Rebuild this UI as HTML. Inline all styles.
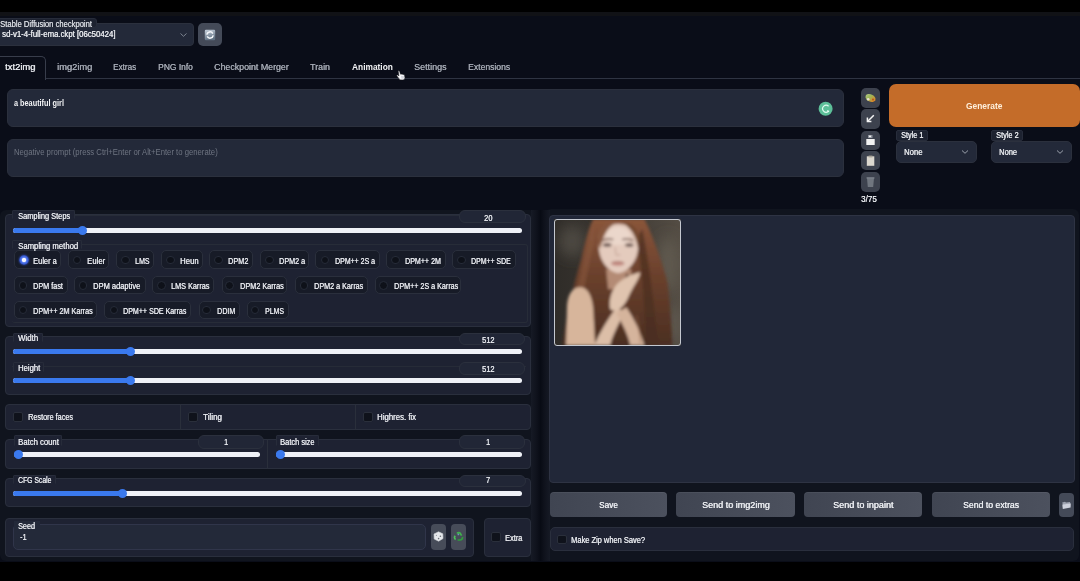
<!DOCTYPE html>
<html><head><meta charset="utf-8"><style>
html,body{margin:0;padding:0;width:1080px;height:581px;overflow:hidden;background:#0b0f19;}
body>div,body>svg{position:absolute;}
.t{font-family:'Liberation Sans', sans-serif;white-space:pre;transform-origin:0 0;font-variant-ligatures:none;font-feature-settings:'liga' 0;}
</style></head><body>
<div style="left:0px;top:0px;width:1080px;height:11.5px;background:#000;border-radius:0px;"></div>
<div style="left:0px;top:11.5px;width:1080px;height:4.0px;background:#111216;border-radius:0px;"></div>
<div style="left:0px;top:15.5px;width:1080px;height:546.5px;background:#0a0d18;border-radius:0px;"></div>
<div style="left:0px;top:562px;width:1080px;height:19px;background:#000;border-radius:0px;"></div>
<div style="left:-6px;top:23px;width:200px;height:23px;background:#232939;border:1px solid #2b303d;box-sizing:border-box;border-radius:4px;"></div>
<div style="left:-4px;top:18px;width:101px;height:10px;background:#1d2230;border:1px solid #272c3a;box-sizing:border-box;border-radius:3px;"></div>
<svg style="left:178.5px;top:31.5px" width="9" height="6" viewBox="0 0 9 6"><path d="M1.5 1.5 L4.5 4.3 L7.5 1.5" stroke="#858b97" stroke-width="0.9" fill="none"/></svg>
<div style="left:198px;top:23px;width:24px;height:23px;background:#444a58;border-radius:5px;"></div>
<svg style="left:204px;top:28.5px" width="12" height="12" viewBox="0 0 12 12"><defs><linearGradient id="rf" x1="0" y1="0" x2="0.3" y2="1"><stop offset="0" stop-color="#c9d3de"/><stop offset="1" stop-color="#5f6f80"/></linearGradient></defs><rect x="0.8" y="0.8" width="10.4" height="10.4" rx="1.2" fill="url(#rf)"/><path d="M2.8 5.6 A3.2 3.2 0 0 1 8.8 4.6" stroke="#f6f8fb" stroke-width="1.5" fill="none"/><path d="M9.2 6.4 A3.2 3.2 0 0 1 3.2 7.4" stroke="#f6f8fb" stroke-width="1.5" fill="none"/></svg>
<div style="left:45px;top:78px;width:1035px;height:1px;background:#2f3442;border-radius:0px;"></div>
<div style="left:-4px;top:55.5px;width:49.5px;height:24px;border:1px solid #383d4b;border-bottom:none;border-radius:0 5px 0 0;box-sizing:border-box;background:#0a0d18"></div>
<svg style="left:396px;top:70.3px" width="10" height="10.5" viewBox="0 0 10 10.5"><path d="M2.2 1.2 C2.5 0.5 3.4 0.6 3.6 1.3 L4.5 4.2 C4.9 3.8 5.7 3.9 5.9 4.4 C6.3 4 7.1 4.1 7.3 4.7 C7.7 4.4 8.4 4.6 8.5 5.2 L8.9 7.4 C9 8.7 8.1 9.8 6.8 9.9 L4.6 9.9 C3.8 9.8 3.2 9.2 2.8 8.4 L0.9 6 C0.5 5.4 1.2 4.6 1.9 5.1 L2.9 5.9 Z" fill="#f6f6f8" stroke="#15161a" stroke-width="0.55"/><path d="M5 6 L7.8 6 L8.2 8.6 L5.4 8.8 Z" fill="#c4c8d0" opacity="0.7"/></svg>
<div style="left:7px;top:89px;width:837px;height:38px;background:#232939;border:1px solid #2b303d;box-sizing:border-box;border-radius:6px;"></div>
<svg style="left:818px;top:101px" width="16" height="16" viewBox="0 0 16 16"><circle cx="7.6" cy="7.7" r="7" fill="#5dbf99"/><path d="M10.6 5.2 A3.5 3.5 0 1 0 10.4 10.4" stroke="#dffaf0" stroke-width="1.2" fill="none"/><path d="M9.2 9.6 L11 10.6" stroke="#e9fff6" stroke-width="1.5"/></svg>
<div style="left:7px;top:139px;width:837px;height:37.5px;background:#232939;border:1px solid #2b303d;box-sizing:border-box;border-radius:6px;"></div>
<div style="left:860.6px;top:88.4px;width:19.399999999999977px;height:19.200000000000003px;background:#3d424e;border-radius:5px;"></div>
<div style="left:860.6px;top:109.4px;width:19.399999999999977px;height:19.19999999999999px;background:#3d424e;border-radius:5px;"></div>
<div style="left:860.6px;top:130.5px;width:19.399999999999977px;height:19.19999999999999px;background:#3d424e;border-radius:5px;"></div>
<div style="left:860.6px;top:151.3px;width:19.399999999999977px;height:19.19999999999999px;background:#3d424e;border-radius:5px;"></div>
<div style="left:860.6px;top:172.4px;width:19.399999999999977px;height:19.19999999999999px;background:#3d424e;border-radius:5px;"></div>
<svg style="left:864px;top:92px" width="13" height="12" viewBox="0 0 13 12"><defs><linearGradient id="pal" x1="0" y1="0" x2="1" y2="0.3"><stop offset="0" stop-color="#b9c98a"/><stop offset="0.45" stop-color="#9cb85a"/><stop offset="1" stop-color="#d88a2a"/></linearGradient></defs><ellipse cx="6.5" cy="6" rx="5.3" ry="3.6" fill="url(#pal)" transform="rotate(25 6.5 6)"/><circle cx="4.2" cy="7.3" r="1.3" fill="#e8e2d0"/><circle cx="9" cy="7.5" r="1" fill="#b8541e"/></svg>
<svg style="left:865px;top:113px" width="11" height="11" viewBox="0 0 11 11"><path d="M8.8 2.2 L3 8" stroke="#f4f4f4" stroke-width="1.5"/><path d="M2.4 4.6 L2.4 8.6 L6.4 8.6" stroke="#f4f4f4" stroke-width="1.5" fill="none"/></svg>
<svg style="left:864px;top:133px" width="13" height="14" viewBox="0 0 13 14"><rect x="4" y="2" width="4.5" height="3" fill="#8d929c"/><rect x="5" y="2.6" width="2" height="1.6" fill="#f0f0f0"/><rect x="2.3" y="6" width="8.4" height="6" fill="#f2f2f2"/></svg>
<svg style="left:864px;top:154px" width="13" height="14" viewBox="0 0 13 14"><rect x="2.8" y="2.3" width="7.5" height="9.5" fill="#dcd8cf"/><rect x="4.6" y="1.6" width="3.8" height="1.8" fill="#aaa59a"/></svg>
<svg style="left:864px;top:175px" width="13" height="14" viewBox="0 0 13 14"><path d="M3 3.2 L10 3.2 L9.2 12 L3.8 12 Z" fill="#70767f"/><rect x="2.6" y="2.3" width="7.8" height="1.3" fill="#858b94"/></svg>
<div style="left:889px;top:84px;width:191px;height:43px;background:#c46c29;border-radius:7px;"></div>
<div style="left:896px;top:140.5px;width:81.29999999999995px;height:22.900000000000006px;background:#232939;border:1px solid #2b303d;box-sizing:border-box;border-radius:5px;"></div>
<div style="left:896px;top:130px;width:32px;height:11px;background:#1d2230;border:1px solid #272c3a;box-sizing:border-box;border-radius:2px;"></div>
<svg style="left:961.3px;top:149px" width="8" height="6" viewBox="0 0 8 6"><path d="M1 1.5 L4 4.3 L7 1.5" stroke="#9aa0ab" stroke-width="1" fill="none"/></svg>
<div style="left:991.3px;top:140.5px;width:80.70000000000005px;height:22.900000000000006px;background:#232939;border:1px solid #2b303d;box-sizing:border-box;border-radius:5px;"></div>
<div style="left:991.3px;top:130px;width:31.700000000000045px;height:11px;background:#1d2230;border:1px solid #272c3a;box-sizing:border-box;border-radius:2px;"></div>
<svg style="left:1056.0px;top:149px" width="8" height="6" viewBox="0 0 8 6"><path d="M1 1.5 L4 4.3 L7 1.5" stroke="#9aa0ab" stroke-width="1" fill="none"/></svg>
<div style="left:0px;top:209.5px;width:536px;height:351.5px;background:#10141e;border-radius:6px;"></div>
<div style="left:545px;top:209px;width:534px;height:352px;background:#10141e;border-radius:6px;"></div>
<div style="left:530.5px;top:209.5px;width:19.0px;height:351.5px;background:linear-gradient(90deg,#161a25 0%,#0f121c 30%,#080b14 50%,#0f121c 70%,#161a25 100%);border-radius:0px;"></div>
<div style="left:5px;top:214px;width:525.5px;height:112.5px;background:#1e2232;border:1px solid #2a2f3d;box-sizing:border-box;border-radius:4px;"></div>
<div style="left:12px;top:214.5px;width:447px;height:0.8000000000000114px;background:#272c38;border-radius:0px;"></div>
<div style="left:459.3px;top:210.3px;width:66.49999999999994px;height:12.899999999999977px;background:#212636;border:1px solid #2b303d;box-sizing:border-box;border-radius:6px;"></div>
<div style="left:12.4px;top:210.3px;width:62.6px;height:9.199999999999989px;background:#1e2232;border:1px solid #272c3a;box-sizing:border-box;border-radius:1.5px;border-bottom:none;"></div>
<div style="left:13px;top:227.7px;width:509.20000000000005px;height:5.0px;background:#eff1f7;border-radius:3px;"></div>
<div style="left:13px;top:227.7px;width:69.5px;height:5.0px;background:#3a79ee;border-radius:3px;"></div>
<div style="left:78.0px;top:225.7px;width:9.0px;height:9.0px;background:#3a79ee;border-radius:5px;"></div>
<div style="left:12px;top:244.2px;width:516px;height:78.60000000000002px;background:transparent;border:1px solid #272c38;box-sizing:border-box;border-radius:3px;border-left:none;"></div>
<div style="left:12.4px;top:240px;width:70.1px;height:9px;background:#1e2232;border:1px solid #272c3a;box-sizing:border-box;border-radius:1.5px;border-bottom:none;"></div>
<div style="left:13.8px;top:250.3px;width:47.400000000000006px;height:19.19999999999999px;background:#171b27;border:1px solid #2a2f3c;box-sizing:border-box;border-radius:5px;"></div>
<div style="left:18.7px;top:254.89999999999998px;width:10.0px;height:10.0px;background:radial-gradient(circle,#f4f6ff 0,#f4f6ff 1.8px,#5b7ff0 2.6px,#3a5fd8 4px,#27409a 5px);border-radius:5px;box-shadow:0 0 2px #3150c0;"></div>
<div style="left:67.8px;top:250.3px;width:41.60000000000001px;height:19.19999999999999px;background:#171b27;border:1px solid #2a2f3c;box-sizing:border-box;border-radius:5px;"></div>
<div style="left:72.6px;top:255.49999999999997px;width:8.800000000000011px;height:8.799999999999983px;background:#0e1119;border:1px solid #262b38;box-sizing:border-box;border-radius:5px;"></div>
<div style="left:116px;top:250.3px;width:38.30000000000001px;height:19.19999999999999px;background:#171b27;border:1px solid #2a2f3c;box-sizing:border-box;border-radius:5px;"></div>
<div style="left:121.19999999999999px;top:255.49999999999997px;width:8.800000000000011px;height:8.799999999999983px;background:#0e1119;border:1px solid #262b38;box-sizing:border-box;border-radius:5px;"></div>
<div style="left:161.3px;top:250.3px;width:42.0px;height:19.19999999999999px;background:#171b27;border:1px solid #2a2f3c;box-sizing:border-box;border-radius:5px;"></div>
<div style="left:165.9px;top:255.49999999999997px;width:8.800000000000011px;height:8.799999999999983px;background:#0e1119;border:1px solid #262b38;box-sizing:border-box;border-radius:5px;"></div>
<div style="left:209px;top:250.3px;width:44.30000000000001px;height:19.19999999999999px;background:#171b27;border:1px solid #2a2f3c;box-sizing:border-box;border-radius:5px;"></div>
<div style="left:213.79999999999998px;top:255.49999999999997px;width:8.800000000000011px;height:8.799999999999983px;background:#0e1119;border:1px solid #262b38;box-sizing:border-box;border-radius:5px;"></div>
<div style="left:259.7px;top:250.3px;width:49.60000000000002px;height:19.19999999999999px;background:#171b27;border:1px solid #2a2f3c;box-sizing:border-box;border-radius:5px;"></div>
<div style="left:264.90000000000003px;top:255.49999999999997px;width:8.799999999999955px;height:8.799999999999983px;background:#0e1119;border:1px solid #262b38;box-sizing:border-box;border-radius:5px;"></div>
<div style="left:314.7px;top:250.3px;width:65.60000000000002px;height:19.19999999999999px;background:#171b27;border:1px solid #2a2f3c;box-sizing:border-box;border-radius:5px;"></div>
<div style="left:320.5px;top:255.49999999999997px;width:8.799999999999955px;height:8.799999999999983px;background:#0e1119;border:1px solid #262b38;box-sizing:border-box;border-radius:5px;"></div>
<div style="left:385.6px;top:250.3px;width:60.69999999999999px;height:19.19999999999999px;background:#171b27;border:1px solid #2a2f3c;box-sizing:border-box;border-radius:5px;"></div>
<div style="left:391.20000000000005px;top:255.49999999999997px;width:8.799999999999955px;height:8.799999999999983px;background:#0e1119;border:1px solid #262b38;box-sizing:border-box;border-radius:5px;"></div>
<div style="left:451.6px;top:250.3px;width:64.5px;height:19.19999999999999px;background:#171b27;border:1px solid #2a2f3c;box-sizing:border-box;border-radius:5px;"></div>
<div style="left:456.8px;top:255.49999999999997px;width:8.799999999999955px;height:8.799999999999983px;background:#0e1119;border:1px solid #262b38;box-sizing:border-box;border-radius:5px;"></div>
<div style="left:13.8px;top:276.4px;width:54.3px;height:18.100000000000023px;background:#171b27;border:1px solid #2a2f3c;box-sizing:border-box;border-radius:5px;"></div>
<div style="left:18.6px;top:281.05px;width:8.799999999999997px;height:8.799999999999955px;background:#0e1119;border:1px solid #262b38;box-sizing:border-box;border-radius:5px;"></div>
<div style="left:74.1px;top:276.4px;width:71.80000000000001px;height:18.100000000000023px;background:#171b27;border:1px solid #2a2f3c;box-sizing:border-box;border-radius:5px;"></div>
<div style="left:78.6px;top:281.05px;width:8.800000000000011px;height:8.799999999999955px;background:#0e1119;border:1px solid #262b38;box-sizing:border-box;border-radius:5px;"></div>
<div style="left:152.3px;top:276.4px;width:61.69999999999999px;height:18.100000000000023px;background:#171b27;border:1px solid #2a2f3c;box-sizing:border-box;border-radius:5px;"></div>
<div style="left:156.79999999999998px;top:281.05px;width:8.800000000000011px;height:8.799999999999955px;background:#0e1119;border:1px solid #262b38;box-sizing:border-box;border-radius:5px;"></div>
<div style="left:221.7px;top:276.4px;width:65.5px;height:18.100000000000023px;background:#171b27;border:1px solid #2a2f3c;box-sizing:border-box;border-radius:5px;"></div>
<div style="left:225.29999999999998px;top:281.05px;width:8.800000000000011px;height:8.799999999999955px;background:#0e1119;border:1px solid #262b38;box-sizing:border-box;border-radius:5px;"></div>
<div style="left:294.7px;top:276.4px;width:73.10000000000002px;height:18.100000000000023px;background:#171b27;border:1px solid #2a2f3c;box-sizing:border-box;border-radius:5px;"></div>
<div style="left:299.70000000000005px;top:281.05px;width:8.799999999999955px;height:8.799999999999955px;background:#0e1119;border:1px solid #262b38;box-sizing:border-box;border-radius:5px;"></div>
<div style="left:375.3px;top:276.4px;width:85.89999999999998px;height:18.100000000000023px;background:#171b27;border:1px solid #2a2f3c;box-sizing:border-box;border-radius:5px;"></div>
<div style="left:378.90000000000003px;top:281.05px;width:8.799999999999955px;height:8.799999999999955px;background:#0e1119;border:1px solid #262b38;box-sizing:border-box;border-radius:5px;"></div>
<div style="left:13.8px;top:300.9px;width:83.10000000000001px;height:18.100000000000023px;background:#171b27;border:1px solid #2a2f3c;box-sizing:border-box;border-radius:5px;"></div>
<div style="left:18.6px;top:305.55px;width:8.799999999999997px;height:8.799999999999955px;background:#0e1119;border:1px solid #262b38;box-sizing:border-box;border-radius:5px;"></div>
<div style="left:104.3px;top:300.9px;width:86.3px;height:18.100000000000023px;background:#171b27;border:1px solid #2a2f3c;box-sizing:border-box;border-radius:5px;"></div>
<div style="left:109.5px;top:305.55px;width:8.800000000000011px;height:8.799999999999955px;background:#0e1119;border:1px solid #262b38;box-sizing:border-box;border-radius:5px;"></div>
<div style="left:198.5px;top:300.9px;width:41.19999999999999px;height:18.100000000000023px;background:#171b27;border:1px solid #2a2f3c;box-sizing:border-box;border-radius:5px;"></div>
<div style="left:202.2px;top:305.55px;width:8.800000000000011px;height:8.799999999999955px;background:#0e1119;border:1px solid #262b38;box-sizing:border-box;border-radius:5px;"></div>
<div style="left:246.9px;top:300.9px;width:41.900000000000006px;height:18.100000000000023px;background:#171b27;border:1px solid #2a2f3c;box-sizing:border-box;border-radius:5px;"></div>
<div style="left:250.6px;top:305.55px;width:8.799999999999983px;height:8.799999999999955px;background:#0e1119;border:1px solid #262b38;box-sizing:border-box;border-radius:5px;"></div>
<div style="left:5px;top:336px;width:525.5px;height:59px;background:#1e2232;border:1px solid #2a2f3d;box-sizing:border-box;border-radius:4px;"></div>
<div style="left:459.3px;top:332.6px;width:66.19999999999999px;height:12.599999999999966px;background:#212636;border:1px solid #2b303d;box-sizing:border-box;border-radius:6px;"></div>
<div style="left:12.6px;top:332.6px;width:30.4px;height:9.599999999999966px;background:#1e2232;border:1px solid #272c3a;box-sizing:border-box;border-radius:1.5px;border-bottom:none;"></div>
<div style="left:13px;top:349.2px;width:509.20000000000005px;height:5.0px;background:#eff1f7;border-radius:3px;"></div>
<div style="left:13px;top:349.2px;width:117.69999999999999px;height:5.0px;background:#3a79ee;border-radius:3px;"></div>
<div style="left:126.19999999999999px;top:347.2px;width:9.0px;height:9.0px;background:#3a79ee;border-radius:5px;"></div>
<div style="left:12px;top:366px;width:514px;height:0.8000000000000114px;background:#262b37;border-radius:0px;"></div>
<div style="left:459.3px;top:361.5px;width:66.19999999999999px;height:13.300000000000011px;background:#212636;border:1px solid #2b303d;box-sizing:border-box;border-radius:6px;"></div>
<div style="left:12.6px;top:362.2px;width:31.799999999999997px;height:9.699999999999989px;background:#1e2232;border:1px solid #272c3a;box-sizing:border-box;border-radius:1.5px;border-bottom:none;"></div>
<div style="left:13px;top:378.1px;width:509.20000000000005px;height:5.0px;background:#eff1f7;border-radius:3px;"></div>
<div style="left:13px;top:378.1px;width:117.69999999999999px;height:5.0px;background:#3a79ee;border-radius:3px;"></div>
<div style="left:126.19999999999999px;top:376.1px;width:9.0px;height:9.0px;background:#3a79ee;border-radius:5px;"></div>
<div style="left:5px;top:404.2px;width:525.5px;height:25.80000000000001px;background:#1e2232;border:1px solid #2a2f3d;box-sizing:border-box;border-radius:4px;"></div>
<div style="left:180.2px;top:404.3px;width:0.8000000000000114px;height:25.69999999999999px;background:#2a2f3b;border-radius:0px;"></div>
<div style="left:355px;top:404.3px;width:0.8000000000000114px;height:25.69999999999999px;background:#2a2f3b;border-radius:0px;"></div>
<div style="left:12.8px;top:412px;width:10.0px;height:9.800000000000011px;background:#0f121b;border:1px solid #2a2f3b;box-sizing:border-box;border-radius:2px;"></div>
<div style="left:187.5px;top:412px;width:10.0px;height:9.800000000000011px;background:#0f121b;border:1px solid #2a2f3b;box-sizing:border-box;border-radius:2px;"></div>
<div style="left:362.5px;top:412px;width:10.0px;height:9.800000000000011px;background:#0f121b;border:1px solid #2a2f3b;box-sizing:border-box;border-radius:2px;"></div>
<div style="left:5px;top:439px;width:525.5px;height:30px;background:#1e2232;border:1px solid #2a2f3d;box-sizing:border-box;border-radius:4px;"></div>
<div style="left:267.3px;top:439px;width:0.8000000000000114px;height:30px;background:#2a2f3b;border-radius:0px;"></div>
<div style="left:197.5px;top:434.5px;width:66.0px;height:14.300000000000011px;background:#212636;border:1px solid #2b303d;box-sizing:border-box;border-radius:6px;"></div>
<div style="left:13.8px;top:435px;width:48.7px;height:11.300000000000011px;background:#1e2232;border:1px solid #272c3a;box-sizing:border-box;border-radius:1.5px;border-bottom:none;"></div>
<div style="left:13.5px;top:451.9px;width:246.3px;height:5.0px;background:#eff1f7;border-radius:3px;"></div>
<div style="left:13.5px;top:451.9px;width:4.5px;height:5.0px;background:#3a79ee;border-radius:3px;"></div>
<div style="left:13.5px;top:449.9px;width:9.0px;height:9.0px;background:#3a79ee;border-radius:5px;"></div>
<div style="left:459px;top:434.7px;width:66.20000000000005px;height:14.0px;background:#212636;border:1px solid #2b303d;box-sizing:border-box;border-radius:6px;"></div>
<div style="left:275.5px;top:435px;width:43.0px;height:11.300000000000011px;background:#1e2232;border:1px solid #272c3a;box-sizing:border-box;border-radius:1.5px;border-bottom:none;"></div>
<div style="left:276px;top:451.7px;width:245.70000000000005px;height:5.0px;background:#eff1f7;border-radius:3px;"></div>
<div style="left:276px;top:451.7px;width:4.5px;height:5.0px;background:#3a79ee;border-radius:3px;"></div>
<div style="left:276.0px;top:449.7px;width:9.0px;height:9.0px;background:#3a79ee;border-radius:5px;"></div>
<div style="left:5px;top:477.9px;width:525.5px;height:29.600000000000023px;background:#1e2232;border:1px solid #2a2f3d;box-sizing:border-box;border-radius:4px;"></div>
<div style="left:459.4px;top:474.5px;width:66.30000000000007px;height:12.0px;background:#212636;border:1px solid #2b303d;box-sizing:border-box;border-radius:6px;"></div>
<div style="left:12.9px;top:474.5px;width:43.0px;height:9.5px;background:#1e2232;border:1px solid #272c3a;box-sizing:border-box;border-radius:1.5px;border-bottom:none;"></div>
<div style="left:13px;top:490.9px;width:509.29999999999995px;height:5.0px;background:#eff1f7;border-radius:3px;"></div>
<div style="left:13px;top:490.9px;width:109.2px;height:5.0px;background:#3a79ee;border-radius:3px;"></div>
<div style="left:117.7px;top:488.9px;width:9.0px;height:9.0px;background:#3a79ee;border-radius:5px;"></div>
<div style="left:5px;top:517.5px;width:468.7px;height:39.299999999999955px;background:#1e2232;border:1px solid #2a2f3d;box-sizing:border-box;border-radius:4px;"></div>
<div style="left:13.4px;top:524.4px;width:412.40000000000003px;height:25.200000000000045px;background:#232939;border:1px solid #30354a;box-sizing:border-box;border-radius:5px;"></div>
<div style="left:14px;top:521px;width:26px;height:7px;background:#232939;border-radius:0px;"></div>
<div style="left:430.7px;top:524.4px;width:15.5px;height:25.5px;background:#474c59;border-radius:4px;"></div>
<div style="left:451.1px;top:524.4px;width:14.899999999999977px;height:25.5px;background:#474c59;border-radius:4px;"></div>
<svg style="left:433px;top:531px" width="11" height="11" viewBox="0 0 11 11"><path d="M5.5 0.8 L9.8 2.8 L10 7.6 L5.6 10.2 L1.2 8 L1 3 Z" fill="#e6e8ec" stroke="#d0d3d8" stroke-width="0.6" stroke-linejoin="round"/><circle cx="7.4" cy="5.2" r="0.8" fill="#6a6f78"/><circle cx="5.6" cy="7.6" r="0.8" fill="#6a6f78"/><circle cx="3.4" cy="4.4" r="0.6" fill="#9aa0a8"/></svg>
<svg style="left:453px;top:531px" width="11" height="11" viewBox="0 0 11 11"><path d="M4 2.6 C5 1.2 6.6 1.2 7.4 2.6 L8.6 4.6" stroke="#3fb44c" stroke-width="1.7" fill="none"/><path d="M9.4 6 C9.8 7.8 8.6 9 7 9 L4.6 9" stroke="#2ea03c" stroke-width="1.7" fill="none"/><path d="M2.6 8.4 C1.2 7.6 1.2 6 2.2 4.8" stroke="#4cc25a" stroke-width="1.7" fill="none"/><circle cx="5.4" cy="3.4" r="0.9" fill="#6a9ab8"/></svg>
<div style="left:483.5px;top:517.5px;width:47.0px;height:39.299999999999955px;background:#1e2232;border:1px solid #2a2f3d;box-sizing:border-box;border-radius:4px;"></div>
<div style="left:491px;top:532px;width:10px;height:9.799999999999955px;background:#0f121b;border:1px solid #2a2f3b;box-sizing:border-box;border-radius:2px;"></div>
<div style="left:549px;top:214.5px;width:525.5px;height:268.3px;background:#212738;border:1px solid #2e3343;box-sizing:border-box;border-radius:4px;border-width:1.5px;"></div>
<svg style="left:554px;top:219px" width="126.5" height="126.5" viewBox="0 0 126 126">
<defs>
<filter id="bl" x="-20%" y="-20%" width="140%" height="140%"><feGaussianBlur stdDeviation="1.5"/></filter>
<filter id="bl2" x="-50%" y="-50%" width="200%" height="200%"><feGaussianBlur stdDeviation="7"/></filter>
<linearGradient id="bgg" x1="0" y1="0" x2="1" y2="0"><stop offset="0" stop-color="#2f2c28"/><stop offset="0.45" stop-color="#3a3631"/><stop offset="1" stop-color="#544d44"/></linearGradient>
<linearGradient id="hair" x1="0" y1="0" x2="0" y2="1"><stop offset="0" stop-color="#8a553a"/><stop offset="0.45" stop-color="#6a402c"/><stop offset="1" stop-color="#4b2e21"/></linearGradient>
</defs>
<rect width="126" height="126" fill="url(#bgg)"/>
<g filter="url(#bl2)"><ellipse cx="18" cy="22" rx="13" ry="16" fill="#4d4842"/><ellipse cx="114" cy="45" rx="10" ry="28" fill="#615a50"/><ellipse cx="120" cy="105" rx="8" ry="18" fill="#5e5850"/></g>
<g filter="url(#bl)">
<path d="M39 0 L90 0 C100 20 108 45 113 63 C116 85 117 110 118 126 L8 126 C12 100 18 70 27 40 C31 22 35 8 39 0 Z" fill="url(#hair)"/>
<path d="M40 2 C34 20 28 50 18 90 L12 126 L22 126 C26 90 32 55 40 25 Z" fill="#8a5a3e" opacity="0.55"/>
<path d="M88 10 C94 40 98 70 104 126 L92 126 C90 84 88 50 82 20 Z" fill="#4a2d20" opacity="0.7"/>
<path d="M52 50 L77 50 L76 70 L54 70 Z" fill="#b48b74"/>
<path d="M44.5 26 C44.5 12 53 5 64 5 C76 5 84 12 84 26 C84 40 76 52 64 54 C52 52 44.5 40 44.5 26 Z" fill="#e4cbbd"/>
<ellipse cx="64" cy="17" rx="12" ry="9" fill="#ebd7cb"/>
<path d="M43 18 C45 8 53 3 63 3 C55 7 49 14 46 30 Z" fill="#86573d"/>
<path d="M85 18 C83 8 76 3 67 3 C76 8 82 16 84 31 Z" fill="#74492f"/>
<path d="M48 21.5 C51 19.5 55 19.5 59 20.5" stroke="#6e5046" stroke-width="1.5" fill="none"/>
<path d="M68 20.5 C72 19.5 76 19.5 79 21.5" stroke="#6e5046" stroke-width="1.5" fill="none"/>
<ellipse cx="53" cy="25.8" rx="4.2" ry="1.9" fill="#6d5953"/>
<ellipse cx="75" cy="26" rx="4.2" ry="1.9" fill="#6d5953"/>
<path d="M61 28 L61.5 35 C62 36 64 36.5 66 35.5" stroke="#c9aa9c" stroke-width="1.3" fill="none"/>
<ellipse cx="63.5" cy="44.3" rx="6.5" ry="2.4" fill="#c68d84"/>
<path d="M57.5 43.6 C60 42.6 67 42.6 69.5 43.6" stroke="#9a6a62" stroke-width="0.9" fill="none"/>
<path d="M72 54 C76 56 78 60 76 64 L70 62 Z" fill="#5e4034" opacity="0.8"/>
<path d="M12 126 L13 86 C14 74 19 68 26 68 C33 68 38 76 39 90 L41 126 Z" fill="#d7b59b"/>
<path d="M40 126 C46 112 54 100 62 88 L70 93 C64 106 58 116 56 126 Z" fill="#dcbea7"/>
<path d="M62 94 C68 104 74 116 76 126 L90 126 C86 112 80 100 72 88 Z" fill="#d5b49c"/>
<path d="M56 90 C54 80 58 68 66 62 C72 57 80 54 86 53 C85 60 78 68 74 78 C70 87 64 94 56 90 Z" fill="#e0c4af"/>
<path d="M82 96 C84 106 86 116 86 124" stroke="#9a6a4c" stroke-width="1.4" fill="none" opacity="0.5"/>
</g>
</svg>
<div style="left:554px;top:219px;width:126.5px;height:126.5px;background:transparent;border:1px solid #c4c8d0;box-sizing:border-box;border-radius:3px;border-width:1.5px;"></div>
<div style="left:549.5px;top:492.3px;width:117.60000000000002px;height:25.19999999999999px;background:linear-gradient(90deg,#404552,#4c515e);border-radius:4px;box-shadow:inset 0 1px 0 rgba(255,255,255,0.05);"></div>
<div style="left:676.3px;top:492.3px;width:118.70000000000005px;height:25.19999999999999px;background:linear-gradient(90deg,#404552,#4c515e);border-radius:4px;box-shadow:inset 0 1px 0 rgba(255,255,255,0.05);"></div>
<div style="left:803.9px;top:492.3px;width:118.60000000000002px;height:25.19999999999999px;background:linear-gradient(90deg,#404552,#4c515e);border-radius:4px;box-shadow:inset 0 1px 0 rgba(255,255,255,0.05);"></div>
<div style="left:931.5px;top:492.3px;width:118.20000000000005px;height:25.19999999999999px;background:linear-gradient(90deg,#404552,#4c515e);border-radius:4px;box-shadow:inset 0 1px 0 rgba(255,255,255,0.05);"></div>
<div style="left:1058.7px;top:492.5px;width:15.5px;height:24.899999999999977px;background:#444a58;border-radius:4px;"></div>
<svg style="left:1061px;top:499.5px" width="11" height="11" viewBox="0 0 11 11"><path d="M1.2 2.4 L4 1.8 L5 2.6 L9 2 L9.4 4 L2 5 Z" fill="#9ea3b0"/><path d="M1.3 4.6 L9.8 3.4 L9.6 7.6 L1.8 9 Z" fill="#cdd1dc"/></svg>
<div style="left:549.5px;top:527.2px;width:524.7px;height:24.299999999999955px;background:#1e2232;border:1px solid #2a2f3d;box-sizing:border-box;border-radius:5px;"></div>
<div style="left:557px;top:534.5px;width:9.799999999999955px;height:9.799999999999955px;background:#0f121b;border:1px solid #2a2f3b;box-sizing:border-box;border-radius:2px;"></div>
<div class="t" style="left:0.00px;top:19.74px;font-size:8.700px;line-height:8.700px;color:#d5d8de;font-weight:normal;text-shadow:0.35px 0 0 #d5d8de;transform:scaleX(0.8780)">Stable Diffusion checkpoint</div>
<div class="t" style="left:2.00px;top:29.94px;font-size:8.700px;line-height:8.700px;color:#e5e7eb;font-weight:normal;text-shadow:0.35px 0 0 #e5e7eb;transform:scaleX(0.8959)">sd-v1-4-full-ema.ckpt [06c50424]</div>
<div class="t" style="left:5.20px;top:63.21px;font-size:9.200px;line-height:9.200px;color:#e7e9ee;font-weight:normal;text-shadow:0.35px 0 0 #e7e9ee;transform:scaleX(1.0218)">txt2img</div>
<div class="t" style="left:56.50px;top:63.21px;font-size:9.200px;line-height:9.200px;color:#a3a8b2;font-weight:normal;text-shadow:0.35px 0 0 #a3a8b2;transform:scaleX(1.0125)">img2img</div>
<div class="t" style="left:113.00px;top:63.21px;font-size:9.200px;line-height:9.200px;color:#a3a8b2;font-weight:normal;text-shadow:0.35px 0 0 #a3a8b2;transform:scaleX(0.8821)">Extras</div>
<div class="t" style="left:157.80px;top:63.21px;font-size:9.200px;line-height:9.200px;color:#a3a8b2;font-weight:normal;text-shadow:0.35px 0 0 #a3a8b2;transform:scaleX(0.9197)">PNG Info</div>
<div class="t" style="left:214.20px;top:63.21px;font-size:9.200px;line-height:9.200px;color:#a3a8b2;font-weight:normal;text-shadow:0.35px 0 0 #a3a8b2;transform:scaleX(0.9611)">Checkpoint Merger</div>
<div class="t" style="left:310.00px;top:63.21px;font-size:9.200px;line-height:9.200px;color:#a3a8b2;font-weight:normal;text-shadow:0.35px 0 0 #a3a8b2;transform:scaleX(0.9603)">Train</div>
<div class="t" style="left:351.70px;top:63.21px;font-size:9.200px;line-height:9.200px;color:#f2f3f5;font-weight:bold;transform:scaleX(0.9094)">Animation</div>
<div class="t" style="left:414.00px;top:63.21px;font-size:9.200px;line-height:9.200px;color:#a3a8b2;font-weight:normal;text-shadow:0.35px 0 0 #a3a8b2;transform:scaleX(0.9777)">Settings</div>
<div class="t" style="left:468.00px;top:63.21px;font-size:9.200px;line-height:9.200px;color:#a3a8b2;font-weight:normal;text-shadow:0.35px 0 0 #a3a8b2;transform:scaleX(0.9333)">Extensions</div>
<div class="t" style="left:14.00px;top:99.24px;font-size:8.700px;line-height:8.700px;color:#f3f4f6;font-weight:bold;transform:scaleX(0.8410)">a beautiful girl</div>
<div class="t" style="left:14.00px;top:148.44px;font-size:8.700px;line-height:8.700px;color:#6f7582;font-weight:normal;transform:scaleX(0.8881)">Negative prompt (press Ctrl+Enter or Alt+Enter to generate)</div>
<div class="t" style="left:860.70px;top:194.74px;font-size:8.700px;line-height:8.700px;color:#e5e7eb;font-weight:normal;text-shadow:0.35px 0 0 #e5e7eb;transform:scaleX(0.9271)">3/75</div>
<div class="t" style="left:966.00px;top:101.17px;font-size:9.600px;line-height:9.600px;color:#fff0dc;font-weight:bold;transform:scaleX(0.8746)">Generate</div>
<div class="t" style="left:901.20px;top:131.14px;font-size:8.700px;line-height:8.700px;color:#e5e7eb;font-weight:normal;text-shadow:0.35px 0 0 #e5e7eb;transform:scaleX(0.8347)">Style 1</div>
<div class="t" style="left:904.00px;top:147.94px;font-size:8.700px;line-height:8.700px;color:#e5e7eb;font-weight:normal;text-shadow:0.35px 0 0 #e5e7eb;transform:scaleX(0.8847)">None</div>
<div class="t" style="left:996.10px;top:131.14px;font-size:8.700px;line-height:8.700px;color:#e5e7eb;font-weight:normal;text-shadow:0.35px 0 0 #e5e7eb;transform:scaleX(0.8459)">Style 2</div>
<div class="t" style="left:999.30px;top:147.94px;font-size:8.700px;line-height:8.700px;color:#e5e7eb;font-weight:normal;text-shadow:0.35px 0 0 #e5e7eb;transform:scaleX(0.8654)">None</div>
<div class="t" style="left:17.90px;top:212.14px;font-size:8.700px;line-height:8.700px;color:#e4e6eb;font-weight:normal;text-shadow:0.35px 0 0 #e4e6eb;transform:scaleX(0.8550)">Sampling Steps</div>
<div class="t" style="left:483.70px;top:213.74px;font-size:8.700px;line-height:8.700px;color:#e4e6eb;font-weight:normal;text-shadow:0.35px 0 0 #e4e6eb;transform:scaleX(0.8577)">20</div>
<div class="t" style="left:17.90px;top:241.84px;font-size:8.700px;line-height:8.700px;color:#e4e6eb;font-weight:normal;text-shadow:0.35px 0 0 #e4e6eb;transform:scaleX(0.8877)">Sampling method</div>
<div class="t" style="left:33.00px;top:256.54px;font-size:8.700px;line-height:8.700px;color:#e4e6eb;font-weight:normal;text-shadow:0.35px 0 0 #e4e6eb;transform:scaleX(0.8597)">Euler a</div>
<div class="t" style="left:86.70px;top:256.54px;font-size:8.700px;line-height:8.700px;color:#e4e6eb;font-weight:normal;text-shadow:0.35px 0 0 #e4e6eb;transform:scaleX(0.8912)">Euler</div>
<div class="t" style="left:135.00px;top:256.54px;font-size:8.700px;line-height:8.700px;color:#e4e6eb;font-weight:normal;text-shadow:0.35px 0 0 #e4e6eb;transform:scaleX(0.8049)">LMS</div>
<div class="t" style="left:179.90px;top:256.54px;font-size:8.700px;line-height:8.700px;color:#e4e6eb;font-weight:normal;text-shadow:0.35px 0 0 #e4e6eb;transform:scaleX(0.8895)">Heun</div>
<div class="t" style="left:228.20px;top:256.54px;font-size:8.700px;line-height:8.700px;color:#e4e6eb;font-weight:normal;text-shadow:0.35px 0 0 #e4e6eb;transform:scaleX(0.8357)">DPM2</div>
<div class="t" style="left:278.50px;top:256.54px;font-size:8.700px;line-height:8.700px;color:#e4e6eb;font-weight:normal;text-shadow:0.35px 0 0 #e4e6eb;transform:scaleX(0.8241)">DPM2 a</div>
<div class="t" style="left:335.00px;top:256.54px;font-size:8.700px;line-height:8.700px;color:#e4e6eb;font-weight:normal;text-shadow:0.35px 0 0 #e4e6eb;transform:scaleX(0.8031)">DPM++ 2S a</div>
<div class="t" style="left:405.20px;top:256.54px;font-size:8.700px;line-height:8.700px;color:#e4e6eb;font-weight:normal;text-shadow:0.35px 0 0 #e4e6eb;transform:scaleX(0.8137)">DPM++ 2M</div>
<div class="t" style="left:471.20px;top:256.54px;font-size:8.700px;line-height:8.700px;color:#e4e6eb;font-weight:normal;text-shadow:0.35px 0 0 #e4e6eb;transform:scaleX(0.7952)">DPM++ SDE</div>
<div class="t" style="left:33.00px;top:282.09px;font-size:8.700px;line-height:8.700px;color:#e4e6eb;font-weight:normal;text-shadow:0.35px 0 0 #e4e6eb;transform:scaleX(0.8330)">DPM fast</div>
<div class="t" style="left:93.30px;top:282.09px;font-size:8.700px;line-height:8.700px;color:#e4e6eb;font-weight:normal;text-shadow:0.35px 0 0 #e4e6eb;transform:scaleX(0.8638)">DPM adaptive</div>
<div class="t" style="left:171.00px;top:282.09px;font-size:8.700px;line-height:8.700px;color:#e4e6eb;font-weight:normal;text-shadow:0.35px 0 0 #e4e6eb;transform:scaleX(0.8339)">LMS Karras</div>
<div class="t" style="left:239.70px;top:282.09px;font-size:8.700px;line-height:8.700px;color:#e4e6eb;font-weight:normal;text-shadow:0.35px 0 0 #e4e6eb;transform:scaleX(0.8369)">DPM2 Karras</div>
<div class="t" style="left:314.00px;top:282.09px;font-size:8.700px;line-height:8.700px;color:#e4e6eb;font-weight:normal;text-shadow:0.35px 0 0 #e4e6eb;transform:scaleX(0.8273)">DPM2 a Karras</div>
<div class="t" style="left:393.50px;top:282.09px;font-size:8.700px;line-height:8.700px;color:#e4e6eb;font-weight:normal;text-shadow:0.35px 0 0 #e4e6eb;transform:scaleX(0.8247)">DPM++ 2S a Karras</div>
<div class="t" style="left:33.00px;top:306.59px;font-size:8.700px;line-height:8.700px;color:#e4e6eb;font-weight:normal;text-shadow:0.35px 0 0 #e4e6eb;transform:scaleX(0.8273)">DPM++ 2M Karras</div>
<div class="t" style="left:123.00px;top:306.59px;font-size:8.700px;line-height:8.700px;color:#e4e6eb;font-weight:normal;text-shadow:0.35px 0 0 #e4e6eb;transform:scaleX(0.8132)">DPM++ SDE Karras</div>
<div class="t" style="left:216.90px;top:306.59px;font-size:8.700px;line-height:8.700px;color:#e4e6eb;font-weight:normal;text-shadow:0.35px 0 0 #e4e6eb;transform:scaleX(0.8187)">DDIM</div>
<div class="t" style="left:265.20px;top:306.59px;font-size:8.700px;line-height:8.700px;color:#e4e6eb;font-weight:normal;text-shadow:0.35px 0 0 #e4e6eb;transform:scaleX(0.7935)">PLMS</div>
<div class="t" style="left:17.80px;top:334.44px;font-size:8.700px;line-height:8.700px;color:#e4e6eb;font-weight:normal;text-shadow:0.35px 0 0 #e4e6eb;transform:scaleX(0.8993)">Width</div>
<div class="t" style="left:481.50px;top:335.64px;font-size:8.700px;line-height:8.700px;color:#e4e6eb;font-weight:normal;text-shadow:0.35px 0 0 #e4e6eb;transform:scaleX(0.8611)">512</div>
<div class="t" style="left:17.80px;top:364.24px;font-size:8.700px;line-height:8.700px;color:#e4e6eb;font-weight:normal;text-shadow:0.35px 0 0 #e4e6eb;transform:scaleX(0.8828)">Height</div>
<div class="t" style="left:481.50px;top:364.74px;font-size:8.700px;line-height:8.700px;color:#e4e6eb;font-weight:normal;text-shadow:0.35px 0 0 #e4e6eb;transform:scaleX(0.8611)">512</div>
<div class="t" style="left:27.50px;top:413.34px;font-size:8.700px;line-height:8.700px;color:#e4e6eb;font-weight:normal;text-shadow:0.35px 0 0 #e4e6eb;transform:scaleX(0.8384)">Restore faces</div>
<div class="t" style="left:202.50px;top:413.34px;font-size:8.700px;line-height:8.700px;color:#e4e6eb;font-weight:normal;text-shadow:0.35px 0 0 #e4e6eb;transform:scaleX(0.9185)">Tiling</div>
<div class="t" style="left:376.70px;top:413.34px;font-size:8.700px;line-height:8.700px;color:#e4e6eb;font-weight:normal;text-shadow:0.35px 0 0 #e4e6eb;transform:scaleX(0.8963)">Highres. fix</div>
<div class="t" style="left:17.50px;top:437.64px;font-size:8.700px;line-height:8.700px;color:#e4e6eb;font-weight:normal;text-shadow:0.35px 0 0 #e4e6eb;transform:scaleX(0.8880)">Batch count</div>
<div class="t" style="left:223.50px;top:438.04px;font-size:8.700px;line-height:8.700px;color:#e4e6eb;font-weight:normal;text-shadow:0.35px 0 0 #e4e6eb;transform:scaleX(0.8266)">1</div>
<div class="t" style="left:279.50px;top:437.64px;font-size:8.700px;line-height:8.700px;color:#e4e6eb;font-weight:normal;text-shadow:0.35px 0 0 #e4e6eb;transform:scaleX(0.8596)">Batch size</div>
<div class="t" style="left:485.60px;top:438.04px;font-size:8.700px;line-height:8.700px;color:#e4e6eb;font-weight:normal;text-shadow:0.35px 0 0 #e4e6eb;transform:scaleX(0.8266)">1</div>
<div class="t" style="left:17.70px;top:475.84px;font-size:8.700px;line-height:8.700px;color:#e4e6eb;font-weight:normal;text-shadow:0.35px 0 0 #e4e6eb;transform:scaleX(0.7851)">CFG Scale</div>
<div class="t" style="left:486.00px;top:476.44px;font-size:8.700px;line-height:8.700px;color:#e4e6eb;font-weight:normal;text-shadow:0.35px 0 0 #e4e6eb;transform:scaleX(0.8266)">7</div>
<div class="t" style="left:18.40px;top:521.64px;font-size:8.700px;line-height:8.700px;color:#e4e6eb;font-weight:normal;text-shadow:0.35px 0 0 #e4e6eb;transform:scaleX(0.8318)">Seed</div>
<div class="t" style="left:20.30px;top:533.14px;font-size:8.700px;line-height:8.700px;color:#e4e6eb;font-weight:normal;text-shadow:0.35px 0 0 #e4e6eb;transform:scaleX(0.8273)">-1</div>
<div class="t" style="left:505.40px;top:534.04px;font-size:8.700px;line-height:8.700px;color:#e4e6eb;font-weight:normal;text-shadow:0.35px 0 0 #e4e6eb;transform:scaleX(0.8470)">Extra</div>
<div class="t" style="left:598.80px;top:500.27px;font-size:9.600px;line-height:9.600px;color:#eceef2;font-weight:normal;text-shadow:0.35px 0 0 #eceef2;transform:scaleX(0.8592)">Save</div>
<div class="t" style="left:702.00px;top:500.27px;font-size:9.600px;line-height:9.600px;color:#eceef2;font-weight:normal;text-shadow:0.35px 0 0 #eceef2;transform:scaleX(0.9398)">Send to img2img</div>
<div class="t" style="left:833.00px;top:500.27px;font-size:9.600px;line-height:9.600px;color:#eceef2;font-weight:normal;text-shadow:0.35px 0 0 #eceef2;transform:scaleX(0.9430)">Send to inpaint</div>
<div class="t" style="left:962.60px;top:500.27px;font-size:9.600px;line-height:9.600px;color:#eceef2;font-weight:normal;text-shadow:0.35px 0 0 #eceef2;transform:scaleX(0.9046)">Send to extras</div>
<div class="t" style="left:571.40px;top:535.84px;font-size:8.700px;line-height:8.700px;color:#e4e6eb;font-weight:normal;text-shadow:0.35px 0 0 #e4e6eb;transform:scaleX(0.8597)">Make Zip when Save?</div>
</body></html>
